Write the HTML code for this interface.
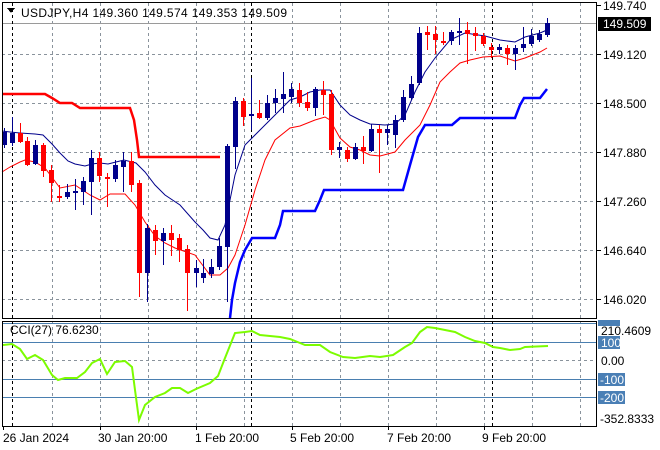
<!DOCTYPE html>
<html><head><meta charset="utf-8"><style>
html,body{margin:0;padding:0;background:#fff;width:660px;height:450px;overflow:hidden}
svg text{font-family:"Liberation Sans","DejaVu Sans",sans-serif;font-size:12px;fill:#000}
</style></head><body>
<svg id="s" width="660" height="450" xmlns="http://www.w3.org/2000/svg" shape-rendering="crispEdges">
<rect width="660" height="450" fill="#fff"/>
<g id="grid" stroke="#8a939c" stroke-dasharray="3,3" stroke-width="1"></g>
<line x1="2" y1="23.5" x2="597" y2="23.5" stroke="#9a9a9a"/>
<g stroke="#4a7fb0"><line x1="2" y1="323.5" x2="597" y2="323.5"/><line x1="2" y1="342.5" x2="597" y2="342.5"/><line x1="2" y1="379.5" x2="597" y2="379.5"/><line x1="2" y1="397.5" x2="597" y2="397.5"/></g>
<line x1="2" y1="360.5" x2="597" y2="360.5" stroke="#8a939c" stroke-dasharray="3,3"/>
<g stroke="#000" stroke-dasharray="3,3"><line x1="12.5" y1="3" x2="12.5" y2="426"/><line x1="251.5" y1="3" x2="251.5" y2="426"/><line x1="492.5" y1="3" x2="492.5" y2="426"/></g>
<g fill="none" shape-rendering="auto">
<polyline stroke="#ff0000" stroke-width="2.5" points="2,94 45,94 52,98 60,103 72,103 80,108 130,108 134,120 137,140 139,157 220,157"/>
<polyline stroke="#0000ff" stroke-width="2.5" points="230,318 232,300 235,283 240,262 245,250 252,238 275,238 280,225 283,211 315,211 320,200 324,190 403,190 410,165 418,137 425,125 452,125 460,118 515,118 520,105 524,98 540,98 547,89"/>
<polyline stroke="#00008b" stroke-width="1" points="2,131 10,132 20,133 35,134 43,135 52,144 60,153 68,161 75,164 85,166 92,164 100,163 108,164 116,162 124,160 136,163 145,172 155,185 165,195 180,205 195,222 203,230 210,238 218,240 225,225 235,175 245,145 252,138 260,130 270,120 280,110 290,100 300,97 310,92 320,90 330,90 340,105 350,115 360,120 370,124 385,125 395,124 405,115 415,92 425,72 435,58 450,40 465,33 485,36 500,40 515,42 525,37 540,33 547,30"/>
<polyline stroke="#ff0000" stroke-width="1" points="2,172 10,167 20,162 25,160 35,162 45,168 60,188 75,185 90,195 100,200 110,194 125,194 135,205 145,222 155,236 165,243 175,248 195,255 210,275 220,275 228,268 235,255 245,225 255,190 265,160 275,140 290,128 300,126 315,120 325,117 330,120 340,138 350,147 360,150 370,155 380,156 395,152 405,140 420,125 430,105 440,82 450,72 460,63 470,60 483,57 500,56 515,61 525,58 540,52 547,48"/>
<polyline stroke="#7cfc00" stroke-width="2" points="3,345 12,344 20,349 27,359 35,355 43,360 52,375 58,380 65,378 77,378 85,372 92,363 100,359 107,374 115,362 125,361 132,367 135,390 139,420 145,405 155,397 165,393 172,388 180,388 188,393 196,389 210,383 218,376 225,358 235,333 245,332 252,331 260,335 280,337 290,339 300,343 305,345 320,345 330,352 343,357 355,358 370,356 380,357 393,355 405,347 412,343 420,332 427,327 435,328 445,330 455,332 465,337 475,341 485,343 493,347 500,348 510,350 520,349 525,347 548,346"/>
</g>
<g id="c"></g>
<g stroke="#000" fill="none"><rect x="2.5" y="2.5" width="594" height="316"/><rect x="2.5" y="321.5" width="594" height="105"/></g>
<path d="M7 8 L15 8 L11 13 Z" fill="#000"/>
<text x="21" y="17" textLength="266" lengthAdjust="spacing">USDJPY,H4  149.360 149.574 149.353 149.509</text>
<text x="10" y="334">CCI(27) 76.6230</text>
<g id="ticks" stroke="#000"></g>
<text x="603" y="10">149.740</text>
<rect x="598" y="17" width="53" height="14" fill="#000"/>
<text x="603" y="28" style="fill:#fff">149.509</text>
<text x="603" y="59">149.120</text>
<text x="603" y="108">148.500</text>
<text x="603" y="157">147.880</text>
<text x="603" y="206">147.260</text>
<text x="603" y="255">146.640</text>
<text x="603" y="304">146.020</text>
<rect x="598" y="320" width="22" height="6" fill="#4a7fb5"/>
<text x="601" y="335">210.4609</text>
<rect x="598" y="336" width="22" height="13" fill="#4a7fb5"/><text x="601" y="347" style="fill:#fff">100</text>
<text x="601" y="365">0.00</text>
<rect x="598" y="373" width="27" height="13" fill="#4a7fb5"/><text x="600" y="384" style="fill:#fff">-100</text>
<rect x="598" y="391" width="27" height="13" fill="#4a7fb5"/><text x="600" y="402" style="fill:#fff">-200</text>
<text x="600" y="423">-352.8333</text>
<text x="3" y="442">26 Jan 2024</text>
<text x="98" y="442">30 Jan 20:00</text>
<text x="195" y="442">1 Feb 20:00</text>
<text x="290" y="442">5 Feb 20:00</text>
<text x="387" y="442">7 Feb 20:00</text>
<text x="482" y="442">9 Feb 20:00</text>
</svg>
<script>
var ns="http://www.w3.org/2000/svg";
function el(p,t,a){var e=document.createElementNS(ns,t);for(var k in a)e.setAttribute(k,a[k]);p.appendChild(e);return e;}
var g=document.getElementById('grid');
[52,100,148,196,244,292,340,388,436,484,532,580].forEach(function(x){el(g,'line',{x1:x+.5,y1:3,x2:x+.5,y2:426});});
[54,103,152,201,250,299].forEach(function(y){el(g,'line',{x1:2,y1:y+.5,x2:597,y2:y+.5});});
var t=document.getElementById('ticks');
[3,100,196,292,388,484].forEach(function(x){el(t,'line',{x1:x+.5,y1:426,x2:x+.5,y2:430});});
[5,54,103,152,201,250,299].forEach(function(y){el(t,'line',{x1:597,y1:y+.5,x2:601,y2:y+.5});});
var B="#00008b",R="#ff0000";
var d=[[4,132,145,128,148,B],[12,133,143,117,146,B],[20,133,142,123,143,R],[27,141,165,137,166,R],[35,145,164,140,165,B],[43,145,171,143,177,R],[51,170,183,165,202,R],[59,196,198,185,202,R],[67,192,197,184,199,B],[75,191,193,179,210,B],[83,181,192,177,205,B],[91,158,182,150,215,B],[99,158,176,152,182,R],[107,177,179,173,207,R],[115,165,179,160,182,B],[123,161,167,152,192,B],[131,161,185,152,192,R],[139,183,273,180,297,R],[147,228,273,224,302,B],[155,230,241,225,255,R],[163,233,241,228,265,B],[171,233,240,225,256,R],[179,238,250,234,262,R],[187,249,273,245,311,R],[196,268,273,260,287,B],[203,273,278,259,283,B],[211,267,274,259,278,B],[219,246,267,238,270,B],[227,146,247,144,302,B],[235,101,147,97,169,B],[243,101,117,98,126,R],[251,114,116,78,130,B],[259,113,118,100,119,R],[267,103,118,95,120,B],[275,98,103,89,113,B],[283,94,99,72,113,B],[291,89,97,83,103,B],[299,90,103,83,107,R],[307,102,108,92,111,R],[315,89,108,87,116,B],[323,90,95,81,115,R],[331,94,150,90,155,R],[339,147,150,142,158,B],[347,150,159,147,162,R],[355,147,159,143,160,B],[363,147,151,136,164,R],[371,129,151,124,152,B],[379,129,133,125,173,R],[387,129,133,125,145,B],[395,120,135,115,148,B],[403,97,120,90,122,B],[411,84,98,76,100,B],[419,33,83,27,85,B],[427,32,35,26,50,R],[435,34,40,26,54,R],[443,41,43,32,45,R],[451,32,41,30,45,B],[459,31,33,18,45,B],[467,30,34,22,64,R],[475,33,36,27,51,R],[483,36,44,33,46,R],[491,47,50,43,58,R],[499,47,50,44,54,B],[507,48,54,45,65,R],[515,48,54,45,70,B],[523,44,48,27,52,B],[531,36,44,29,46,B],[539,34,40,30,42,B],[547,23,35,18,37,B]];
var c=document.getElementById('c');
d.forEach(function(a){el(c,'line',{x1:a[0]+.5,y1:a[3],x2:a[0]+.5,y2:a[4],stroke:a[5]});el(c,'rect',{x:a[0]-2,y:a[1],width:5,height:Math.max(2,a[2]-a[1]),fill:a[5]});});
</script>
</body></html>
